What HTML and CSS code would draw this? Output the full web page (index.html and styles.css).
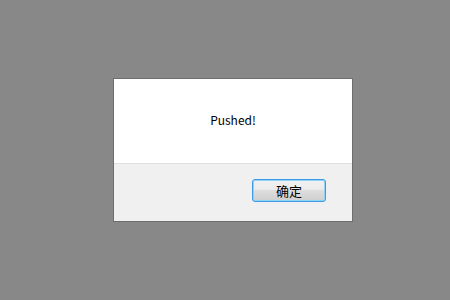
FILE: index.html
```html
<!DOCTYPE html>
<html lang="zh">
<head>
    <meta charset="UTF-8">
    <title>Message</title>
    <link rel="stylesheet" href="styles.css">
</head>
<body>
    <div class="screen">
        <div class="dialog">
            <div class="dialog-body">Pushed!</div>
            <div class="dialog-footer">
                <button class="ok-button">确定</button>
            </div>
        </div>
    </div>
</body>
</html>
```
FILE: styles.css
```css
body {
    margin: 0;
    padding: 0;
    background: #888888;
    font-family: "Noto Sans CJK SC", "DejaVu Sans", sans-serif;
    font-size: 12px;
    color: #000;
}

.screen {
    width: 450px;
    height: 300px;
    padding: 78px 0 0 113px;
    box-sizing: border-box;
}

.dialog {
    width: 240px;
    height: 144px;
    box-sizing: border-box;
    border: 1px solid #6e6e6e;
    background: #fff;
    display: flex;
    flex-direction: column;
}

.dialog-body {
    height: 84px;
    display: flex;
    align-items: center;
    justify-content: center;
    padding-bottom: 4px;
    box-sizing: border-box;
}

.dialog-footer {
    flex: 1;
    background: #f0f0f0;
    border-top: 1px solid #dfdfdf;
    display: flex;
    justify-content: flex-end;
    align-items: flex-start;
    padding: 15px 26px 0 0;
}

.ok-button {
    width: 74px;
    height: 23px;
    padding: 0;
    border: 1px solid #3c9be3;
    border-radius: 3px;
    background: linear-gradient(#f2f2f2 0%, #ebebeb 45%, #dddddd 50%, #cfcfcf 100%);
    box-shadow: inset 0 0 0 1px #8ed3f5;
    font-family: "Noto Sans CJK SC", sans-serif;
    font-size: 13px;
    line-height: 21px;
    color: #000;
}
```
